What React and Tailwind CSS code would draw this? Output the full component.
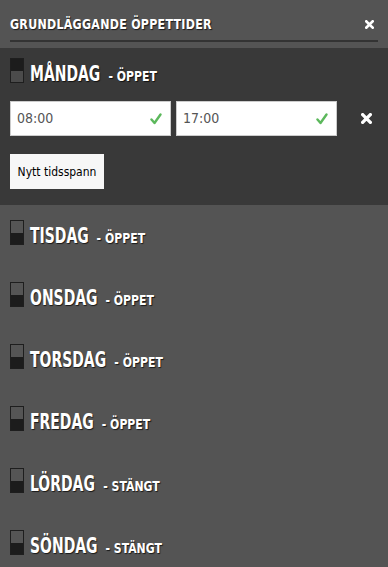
import React from "react";

const days = [
  { name: "TISDAG", status: "ÖPPET" },
  { name: "ONSDAG", status: "ÖPPET" },
  { name: "TORSDAG", status: "ÖPPET" },
  { name: "FREDAG", status: "ÖPPET" },
  { name: "LÖRDAG", status: "STÄNGT" },
  { name: "SÖNDAG", status: "STÄNGT" },
];

const font = { fontFamily: '"DejaVu Sans Condensed", "DejaVu Sans", sans-serif' };

function Toggle({ on }) {
  return (
    <div className="flex h-[25px] w-[14px] shrink-0 flex-col border border-[#1e1e1e]">
      <div className={on ? "flex-1 bg-[#1c1c1c]" : "flex-1 bg-[#555555]"} />
      <div className={on ? "flex-1 bg-[#4b4b4b]" : "flex-1 bg-[#1c1c1c]"} />
    </div>
  );
}

function Cross({ size = 9 }) {
  return (
    <svg width={size} height={size} viewBox="0 0 10 10">
      <path d="M1.5 1.5 L8.5 8.5 M8.5 1.5 L1.5 8.5" stroke="#fff" strokeWidth="3" strokeLinecap="square" />
    </svg>
  );
}

function Check() {
  return (
    <svg width="12" height="12" viewBox="0 0 12 12">
      <path d="M1.5 6.5 L4.5 10 L10.5 1.5" fill="none" stroke="#5cb85c" strokeWidth="2.4" strokeLinecap="round" strokeLinejoin="round" />
    </svg>
  );
}

function DayLabel({ name, status }) {
  return (
    <div className="flex origin-left scale-x-[0.74] items-baseline whitespace-nowrap text-white [text-shadow:1px_1px_1px_rgba(0,0,0,0.7)]">
      <span className="text-[21px] font-bold leading-none">{name}</span>
      <span className="ml-[11px] inline-block origin-left scale-x-[1.17] text-[14px] font-bold leading-none">- {status}</span>
    </div>
  );
}

function DayRow({ on, name, status }) {
  return (
    <div className="flex h-[25px] items-start gap-[6px]">
      <Toggle on={on} />
      <div className="pt-[6px]">
        <DayLabel name={name} status={status} />
      </div>
    </div>
  );
}

function TimeInput({ value }) {
  return (
    <div className="flex h-[35px] w-[161px] items-center justify-between border border-[#cccccc] bg-white pl-[6px] pr-[8px]">
      <span className="text-[14px] text-[#555555]">{value}</span>
      <Check />
    </div>
  );
}

export default function App() {
  return (
    <div className="h-[567px] w-[388px] overflow-hidden bg-[#545454]" style={font}>
      <div className="px-[10px] pb-[6px] pt-[6px]">
        <div className="flex h-[36px] items-center justify-between border-b-2 border-[#333333] pr-[4px] pt-[2px]">
          <span className="inline-block origin-left scale-x-[0.88] whitespace-nowrap text-[14px] font-bold leading-none tracking-[0.3px] text-white [text-shadow:1px_1px_1px_rgba(0,0,0,0.7)]">
            GRUNDLÄGGANDE ÖPPETTIDER
          </span>
          <Cross size={9} />
        </div>
      </div>

      <div className="bg-[#393939] px-[10px] pb-[16px] pt-[10px]">
        <DayRow on name="MÅNDAG" status="ÖPPET" />
        <div className="mt-[18px] flex items-center gap-[5px]">
          <TimeInput value="08:00" />
          <TimeInput value="17:00" />
          <div className="ml-[19px]">
            <Cross size={11} />
          </div>
        </div>
        <button className="mt-[18px] flex h-[35px] w-[94px] items-center justify-center bg-[#f7f7f7] text-[12px] text-black">
          Nytt tidsspann
        </button>
      </div>

      {days.map((d) => (
        <div key={d.name} className="h-[62px] px-[10px] pt-[15px]">
          <DayRow on={false} name={d.name} status={d.status} />
        </div>
      ))}
    </div>
  );
}
